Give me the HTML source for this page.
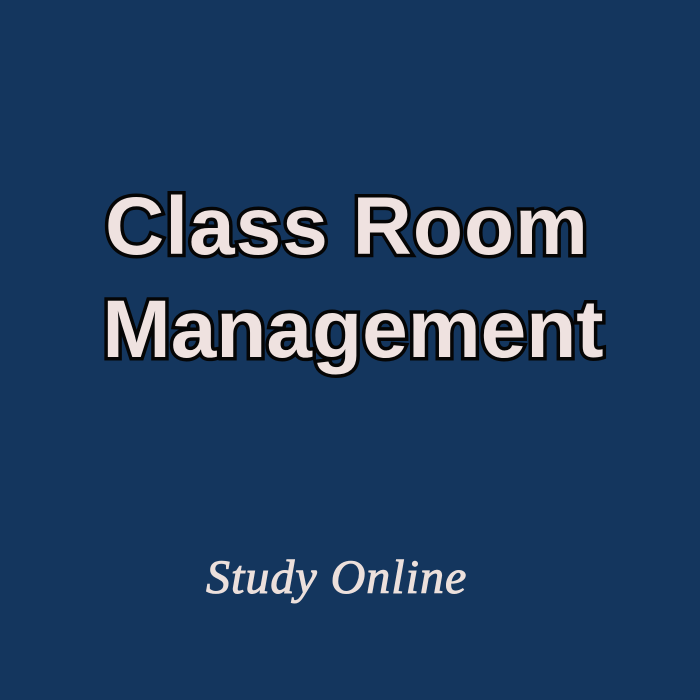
<!DOCTYPE html>
<html><head><style>
html,body{margin:0;padding:0}
body{width:700px;height:700px;background:#14365e;position:relative;overflow:hidden}
.t{position:absolute;left:0;width:700px;text-align:center;font-family:"Liberation Sans",sans-serif;font-weight:bold;color:#efe2e0;-webkit-text-stroke:7px #050505;paint-order:stroke fill;white-space:nowrap}
.s{position:absolute;left:206px;top:550px;font-family:"Liberation Serif",serif;font-style:italic;font-size:48px;color:#ece0dc;letter-spacing:1px;-webkit-text-stroke:1px #ece0dc}
</style></head><body>
<div class="t" style="top:180px;font-size:82px;letter-spacing:1px;left:-3px">Class Room</div>
<div class="t" style="top:283px;font-size:82px;letter-spacing:0px;left:3px">Management</div>
<div class="s">Study Online</div>
</body></html>
